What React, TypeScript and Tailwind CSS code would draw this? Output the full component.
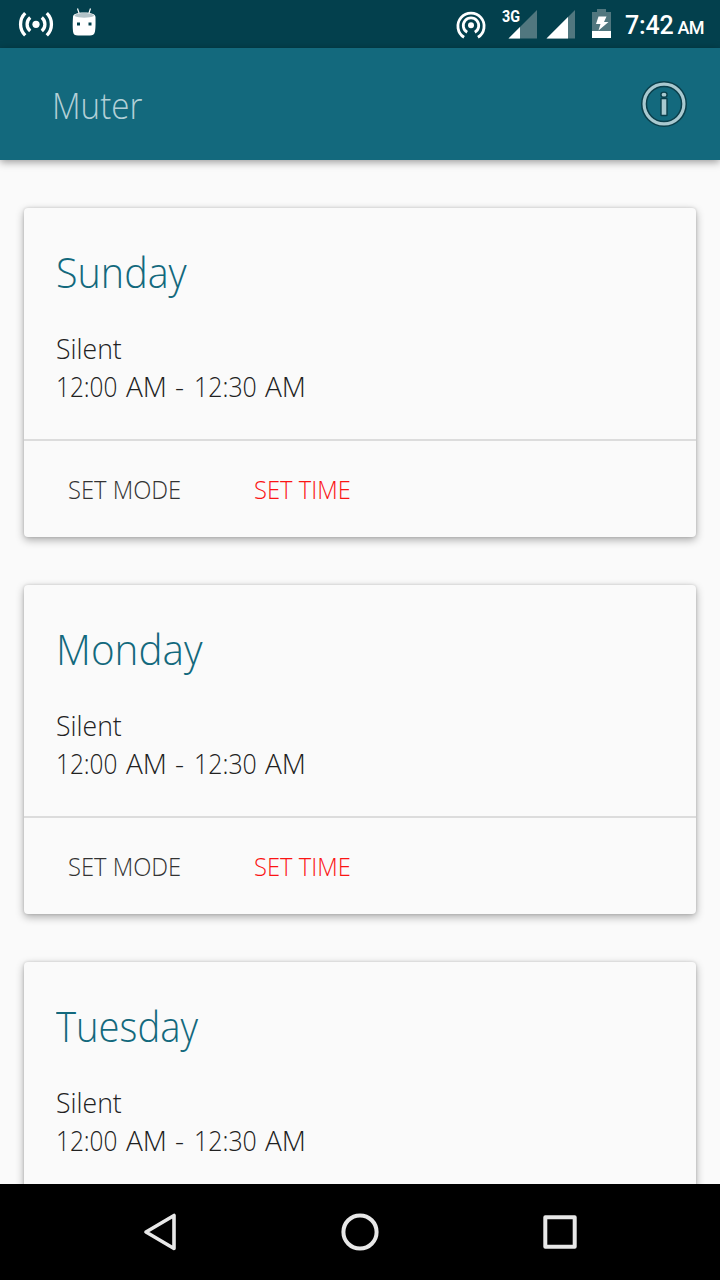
const days = [
  { name: 'Sunday', scale: 'scale-x-[0.94]', hasActions: true },
  { name: 'Monday', scale: 'scale-x-[0.962]', hasActions: true },
  { name: 'Tuesday', scale: 'scale-x-[0.91]', hasActions: false },
];

function StatusBar() {
  return (
    <header className="flex h-12 shrink-0 items-center bg-[#03404d] text-white">
      <svg className="ml-4 h-12 w-10" viewBox="16 0 40 48" fill="none" stroke="white" strokeWidth="3.3">
        <circle cx="36" cy="24.3" r="3.6" fill="white" stroke="none" />
        <path d="M30.2 17.5a9 9 0 0 0 0 13.6M41.8 17.5a9 9 0 0 1 0 13.6" />
        <path d="M25.2 13.2a15.6 15.6 0 0 0 0 22.2M46.8 13.2a15.6 15.6 0 0 1 0 22.2" />
      </svg>
      <svg className="ml-3 h-12 w-8" viewBox="68 0 32 48">
        <path d="M77.5 8.5l2 6M90.5 8.5l-2 6" stroke="white" strokeWidth="1.2" />
        <path d="M73 17c0-3 4-4.500 11-4.500s11.500 1.500 11.500 4.500c0 5 .3 10-.5 14.500-.6 3-2.500 4-5 4H78c-3 0-4.600-1-5-4-.5-5-.3-10 0-14.500z" fill="white" />
        <path d="M74.500 16c0-2 4-3 9.500-3s10 1 10 3c-4 2.200-15.500 2.200-19.500 0z" fill="#b3c3c8" />
        <rect x="77" y="22.500" width="3" height="3" fill="#03404d" />
        <rect x="88.500" y="22.500" width="3" height="3" fill="#03404d" />
      </svg>
      <svg className="ml-auto h-12 w-9" viewBox="453 0 36 48" fill="none" stroke="white" strokeWidth="2.800">
        <circle cx="471" cy="25.300" r="3" fill="white" stroke="none" />
        <path d="M467.200 32.200a7.700 7.700 0 1 1 7.600 0M464.100 37.300a13.100 13.100 0 1 1 13.800 0" />
      </svg>
      <div className="relative ml-3 h-12 w-9">
        <svg className="h-12 w-9" viewBox="501 0 36 48">
          <path d="M537 10v28.500h-28.500z" fill="#51777f" />
          <path d="M520 27v11.500h-11.500z" fill="white" />
        </svg>
        <span className="absolute left-[1px] top-[9px] origin-left scale-x-[0.87] font-['Roboto'] text-[16.500px] font-bold leading-none">3G</span>
      </div>
      <svg className="ml-[9px] h-12 w-[30px]" viewBox="546 0 30 48">
        <path d="M575 10v28.500h-28.500z" fill="#51777f" />
        <path d="M568 17v21.500h-21.500z" fill="white" />
      </svg>
      <svg className="ml-[15px] h-12 w-5" viewBox="591 0 20 48">
        <path d="M592 12h5V9h9v3h5v19h-19z" fill="#51777f" />
        <path d="M592 31h19v7h-19z" fill="white" />
        <path d="M598.500 16.500h8l-2.500 5.500h4.500l-10 8.500 2-6.500h-4.500z" fill="white" />
      </svg>
      <div className="ml-[14px] mt-[3px] flex w-[95px] items-baseline whitespace-nowrap font-['Roboto'] font-medium">
        <span className="text-[25px] tracking-[-0.200px]">7:42</span>
        <span className="ml-1 text-[18px] tracking-[-0.600px]">AM</span>
      </div>
    </header>
  );
}

function AppBar() {
  return (
    <div className="relative z-10 flex h-28 shrink-0 items-center justify-between bg-[#13697d] pl-[52px] pr-8 shadow-[0_2px_8px_rgba(0,0,0,0.4)]">
      <h1 className="mt-[3px] origin-left scale-x-[0.92] text-[36px] font-light leading-none text-[#b3d0d7]">Muter</h1>
      <svg className="h-12 w-12" viewBox="640 80 48 48" fill="none">
        <circle cx="664" cy="104" r="19.900" stroke="#0b3f4b" strokeWidth="6.200" />
        <circle cx="664" cy="104" r="19.900" stroke="#a9c9d0" strokeWidth="3.200" />
        <ellipse cx="664" cy="94.700" rx="3.100" ry="2.600" fill="#a9c9d0" stroke="#0b3f4b" strokeWidth="1.400" />
        <rect x="661" y="98.500" width="6" height="17" rx=".6" fill="#a9c9d0" stroke="#0b3f4b" strokeWidth="1.400" />
      </svg>
    </div>
  );
}

function DayCard({ name, scale, hasActions }: (typeof days)[number]) {
  return (
    <section className="h-[329px] shrink-0 rounded-[4px] bg-[#fafafa] shadow-[0_3px_8px_rgba(0,0,0,0.32),0_0_3px_rgba(0,0,0,0.15)]">
      <div className="h-[231px] pl-8 pt-[38px]">
        <h2 className={`w-fit origin-left text-[42px] font-light leading-[52px] text-[#13697d] ${scale}`}>{name}</h2>
        <p className="mt-[31px] w-fit origin-left scale-x-[0.95] text-[28px] font-light leading-[38px] text-[#212121]">Silent</p>
        <p className="flex whitespace-nowrap text-[28px] font-light leading-[38px] text-[#212121]">
          <span className="w-[70px] origin-left scale-x-[0.87]">12:00</span>
          <span className="w-[49px]">AM</span>
          <span className="w-[19px]">-</span>
          <span className="w-[71px] origin-left scale-x-[0.89]">12:30</span>
          <span>AM</span>
        </p>
      </div>
      {hasActions && (
        <div className="flex h-[98px] items-center border-t-2 border-[#dcdcdc] pl-[44px] pt-[2px] text-[25px] font-light [word-spacing:2px]">
          <button className="w-[186px] origin-left scale-x-[0.95] text-left text-[#333333]">SET MODE</button>
          <button className="origin-left scale-x-[0.95] text-left text-[#fb1414]">SET TIME</button>
        </div>
      )}
    </section>
  );
}

function NavBar() {
  return (
    <nav className="relative z-10 flex h-24 shrink-0 items-center justify-center gap-[152px] bg-black">
      <svg className="h-12 w-12" viewBox="0 0 48 48" fill="none" stroke="#e8e8e8" strokeWidth="4" strokeLinejoin="round">
        <path d="M38 7.500v33L10 24z" strokeWidth="3.600" />
      </svg>
      <svg className="h-12 w-12" viewBox="0 0 48 48" fill="none" stroke="#e8e8e8" strokeWidth="4">
        <circle cx="24" cy="24" r="16.600" />
      </svg>
      <svg className="h-12 w-12" viewBox="0 0 48 48" fill="none" stroke="#e8e8e8" strokeWidth="4" strokeLinejoin="round">
        <path d="M9.300 9.300h29.400v29.400h-29.400z" />
      </svg>
    </nav>
  );
}

export default function App() {
  return (
    <div className="flex h-[1280px] w-[720px] flex-col overflow-hidden bg-[#fafafa] font-['Open_Sans','Noto_Sans',sans-serif]">
      <StatusBar />
      <AppBar />
      <main className="flex min-h-0 flex-1 flex-col gap-12 overflow-hidden px-6 pt-12">
        {days.map((day) => (
          <DayCard key={day.name} {...day} />
        ))}
      </main>
      <NavBar />
    </div>
  );
}
